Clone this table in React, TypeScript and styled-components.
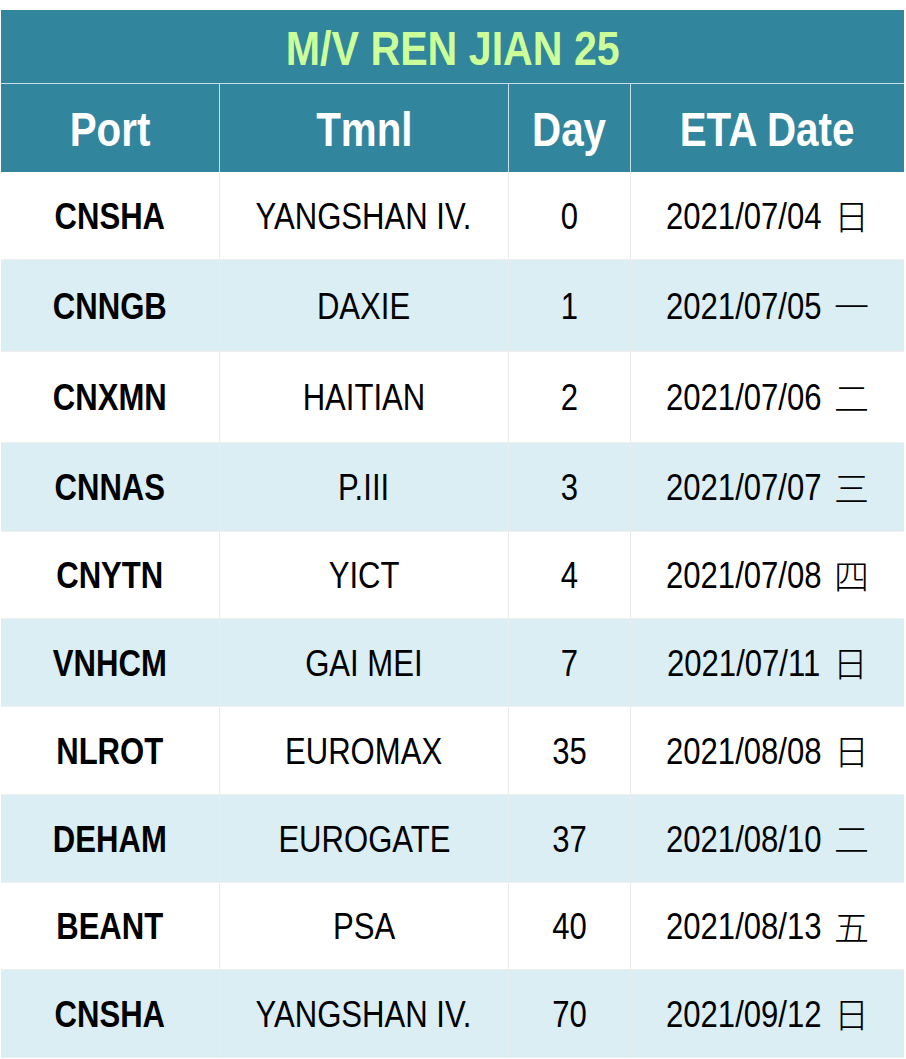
import React from "react";
import styled, { createGlobalStyle } from "styled-components";

const Global = createGlobalStyle`
  html, body { margin: 0; padding: 0; background: #ffffff; }
  body { font-family: "Liberation Sans", Arial, sans-serif; }
`;

const Page = styled.div`
  padding: 10px 0 0 1px;
`;

const Table = styled.div`
  display: grid;
  grid-template-columns: 219px 289px 122px 273px;
  width: 903px;
`;

const Narrow = styled.span`
  display: inline-block;
  white-space: nowrap;
  transform: scaleX(0.84);
`;

const Title = styled.div`
  grid-column: 1 / -1;
  height: 74px;
  box-sizing: border-box;
  background: #31859c;
  border-bottom: 1px solid #c9dfe5;
  display: flex;
  align-items: center;
  justify-content: center;
  color: #ccff99;
  font-weight: 700;
  font-size: 49px;
  padding-top: 2px;
`;

const HeadCell = styled.div<{ $last?: boolean }>`
  height: 88px;
  box-sizing: border-box;
  background: #31859c;
  border-right: ${(p) => (p.$last ? "none" : "1px solid #c9dfe5")};
  display: flex;
  align-items: center;
  justify-content: center;
  color: #ffffff;
  font-weight: 700;
  font-size: 48px;
  padding-top: 2px;
`;

const Cell = styled.div<{ $alt: boolean; $h: number; $last?: boolean; $bold?: boolean }>`
  height: ${(p) => p.$h}px;
  box-sizing: border-box;
  background: ${(p) => (p.$alt ? "#daeef3" : "#ffffff")};
  border-right: ${(p) => (p.$last ? "none" : "1px solid #ebebeb")};
  border-bottom: 1px solid #efefef;
  display: flex;
  align-items: center;
  justify-content: center;
  color: #000000;
  font-weight: ${(p) => (p.$bold ? 700 : 400)};
  font-size: 37px;
  padding-top: 2px;
`;

const DateText = styled(Narrow)`
  transform-origin: left center;
  margin-right: -17px;
`;

const Weekday = styled.span`
  font-family: "Noto Sans CJK TC", "Noto Sans CJK SC", sans-serif;
  font-weight: 300;
  font-size: 35px;
  margin-bottom: 4px;
`;

const rows: [string, string, string, string, string, number][] = [
  ["CNSHA", "YANGSHAN IV.", "0", "2021/07/04", "日", 88],
  ["CNNGB", "DAXIE", "1", "2021/07/05", "一", 92],
  ["CNXMN", "HAITIAN", "2", "2021/07/06", "二", 91],
  ["CNNAS", "P.III", "3", "2021/07/07", "三", 89],
  ["CNYTN", "YICT", "4", "2021/07/08", "四", 87],
  ["VNHCM", "GAI MEI", "7", "2021/07/11", "日", 88],
  ["NLROT", "EUROMAX", "35", "2021/08/08", "日", 88],
  ["DEHAM", "EUROGATE", "37", "2021/08/10", "二", 88],
  ["BEANT", "PSA", "40", "2021/08/13", "五", 87],
  ["CNSHA", "YANGSHAN IV.", "70", "2021/09/12", "日", 88],
];

export default function App() {
  return (
    <Page>
      <Global />
      <Table>
        <Title><Narrow>M/V REN JIAN 25</Narrow></Title>
        <HeadCell><Narrow>Port</Narrow></HeadCell>
        <HeadCell><Narrow>Tmnl</Narrow></HeadCell>
        <HeadCell><Narrow>Day</Narrow></HeadCell>
        <HeadCell $last><Narrow>ETA Date</Narrow></HeadCell>
        {rows.map(([port, tmnl, day, date, wd, h], i) => {
          const alt = i % 2 === 1;
          return (
            <React.Fragment key={i}>
              <Cell $alt={alt} $h={h} $bold><Narrow>{port}</Narrow></Cell>
              <Cell $alt={alt} $h={h}><Narrow>{tmnl}</Narrow></Cell>
              <Cell $alt={alt} $h={h}><Narrow>{day}</Narrow></Cell>
              <Cell $alt={alt} $h={h} $last>
                <DateText>{date}</DateText>
                <Weekday>{wd}</Weekday>
              </Cell>
            </React.Fragment>
          );
        })}
      </Table>
    </Page>
  );
}
